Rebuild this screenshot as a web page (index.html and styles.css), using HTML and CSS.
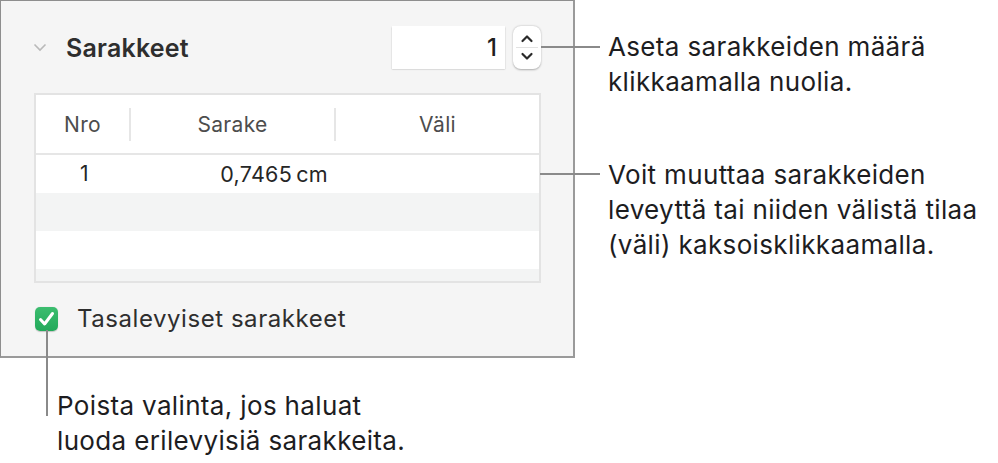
FILE: index.html
```html
<!DOCTYPE html>
<html lang="fi">
<head>
<meta charset="utf-8">
<link rel="stylesheet" href="styles.css">
</head>
<body>
<div class="figure">
  <div class="panel">
    <div class="header">
      <svg class="disclosure" width="14" height="9" viewBox="0 0 14 9"><path d="M1.5 1.5 L7 7 L12.5 1.5" fill="none" stroke="#b9b9b9" stroke-width="1.6"/></svg>
      <span class="title">Sarakkeet</span>
      <div class="num-input">1</div>
      <div class="stepper">
        <svg width="28" height="43" viewBox="0 0 28 43">
          <path d="M9.5 15 L14 10.5 L18.5 15" fill="none" stroke="#2a2a2a" stroke-width="2.2" stroke-linecap="round" stroke-linejoin="round"/>
          <line x1="3" y1="21.5" x2="25" y2="21.5" stroke="#e2e2e2" stroke-width="1"/>
          <path d="M9.5 28 L14 32.5 L18.5 28" fill="none" stroke="#2a2a2a" stroke-width="2.2" stroke-linecap="round" stroke-linejoin="round"/>
        </svg>
      </div>
    </div>
    <div class="table">
      <div class="thead">
        <div class="th c1">Nro</div>
        <div class="th c2">Sarake</div>
        <div class="th c3">Väli</div>
      </div>
      <div class="tr">
        <div class="td c1">1</div>
        <div class="td c2 num">0,7465&#8201;cm</div>
        <div class="td c3"></div>
      </div>
      <div class="tr alt"></div>
      <div class="tr"></div>
      <div class="tr alt short"></div>
    </div>
    <div class="check-row">
      <span class="checkbox">
        <svg width="23" height="24" viewBox="0 0 23 24"><path d="M5.5 12.5 L9.6 17 L17.5 6.5" fill="none" stroke="#fff" stroke-width="3" stroke-linecap="round" stroke-linejoin="round"/></svg>
      </span>
      <span class="check-label">Tasalevyiset sarakkeet</span>
    </div>
  </div>
  <div class="callouts">
    <p class="callout first">Aseta sarakkeiden määrä<br>klikkaamalla nuolia.</p>
    <p class="callout second">Voit muuttaa sarakkeiden<br>leveyttä tai niiden välistä tilaa<br>(väli) kaksoisklikkaamalla.</p>
  </div>
  <p class="callout bottom">Poista valinta, jos haluat<br>luoda erilevyisiä sarakkeita.</p>
  <span class="leader h1"></span>
  <span class="leader h2"></span>
  <span class="leader v1"></span>
</div>
</body>
</html>
```
FILE: styles.css
```css
html, body {
  margin: 0;
  padding: 0;
  background: #ffffff;
}
body {
  font-family: "Inter", "Liberation Sans", sans-serif;
  color: #1d1d1f;
}
.figure {
  position: relative;
  display: grid;
  grid-template-columns: 575px 1fr;
  width: 998px;
  height: 463px;
}
.panel {
  box-sizing: border-box;
  height: 358px;
  background: #f5f5f5;
  border: 1px solid #8e8e8e;
  border-right: 2px solid #9a9a9a;
  border-bottom: 2px solid #9a9a9a;
  padding: 25px 32px 0 32px;
  display: flex;
  flex-direction: column;
}
.header {
  display: flex;
  align-items: center;
  height: 43px;
}
.disclosure {
  width: 14px;
}
.title {
  margin-left: 19px;
  font-size: 25px;
  line-height: 30px;
  font-weight: 600;
  letter-spacing: 0.2px;
  color: #2e2e2e;
  flex: 1;
}
.num-input {
  box-sizing: border-box;
  width: 113px;
  height: 43px;
  background: #fff;
  box-shadow: 0 0.5px 1.5px rgba(0,0,0,0.28);
  text-align: right;
  padding-right: 8px;
  font-size: 24px;
  font-weight: 500;
  line-height: 43px;
  color: #1f1f1f;
}
.stepper {
  margin-left: 8px;
  width: 28px;
  height: 43px;
  background: #fff;
  border-radius: 8px;
  box-shadow: 0 0.5px 2px rgba(0,0,0,0.3);
}
.stepper svg { display: block; }
.table {
  margin-top: 24px;
  margin-left: 1px;
  box-sizing: border-box;
  width: 507px;
  height: 190px;
  border: 2px solid #e3e3e3;
  background: #fff;
  overflow: hidden;
}
.thead {
  display: flex;
  height: 58px;
  border-bottom: 2px solid #e6e6e6;
  align-items: center;
}
.th {
  font-size: 21px;
  letter-spacing: 0.3px;
  color: #4d4d4d;
  text-align: center;
  height: 33px;
  line-height: 33px;
}
.c1 { width: 93px; }
.c2 { width: 203px; }
.c3 { flex: 1; }
.th.c1, .th.c2 { border-right: 2px solid #e6e6e6; }
.tr {
  display: flex;
  height: 38px;
  align-items: center;
}
.tr.alt { background: #f3f4f4; }
.tr.short { height: 16px; }
.td {
  font-size: 21px;
  line-height: 26px;
  letter-spacing: 0.3px;
  color: #262626;
}
.td.c1 { text-align: center; width: 97px; }
.td.num { text-align: right; padding-right: 8px; box-sizing: border-box; width: 203px; font-size: 21.5px; }
.check-row {
  display: flex;
  align-items: center;
  margin-top: 21px;
  margin-left: 2px;
}
.checkbox {
  width: 23px;
  height: 24px;
  border-radius: 5px;
  background: linear-gradient(#3cbd6f, #22a95a);
  box-shadow: 0 0.5px 1px rgba(0,0,0,0.2);
}
.checkbox svg { display: block; }
.check-label {
  margin-left: 19px;
  font-size: 24px;
  line-height: 30px;
  letter-spacing: 0.55px;
  color: #2e2e2e;
}
.callouts {
  padding-left: 33px;
}
.callout {
  margin: 0;
  font-size: 26px;
  letter-spacing: 0.35px;
  line-height: 35px;
  color: #1d1d1f;
}
.callout.first { margin-top: 29px; }
.callout.second { margin-top: 58px; }
.callout.bottom {
  grid-column: 1 / 3;
  margin-left: 57px;
  margin-top: 24px;
}
.leader {
  position: absolute;
  background: #8a8a8a;
}
.leader.h1 { left: 541px; top: 46px; width: 59px; height: 2px; }
.leader.h2 { left: 540px; top: 173px; width: 60px; height: 2px; }
.leader.v1 { left: 46px; top: 330px; width: 2px; height: 86px; }
```
